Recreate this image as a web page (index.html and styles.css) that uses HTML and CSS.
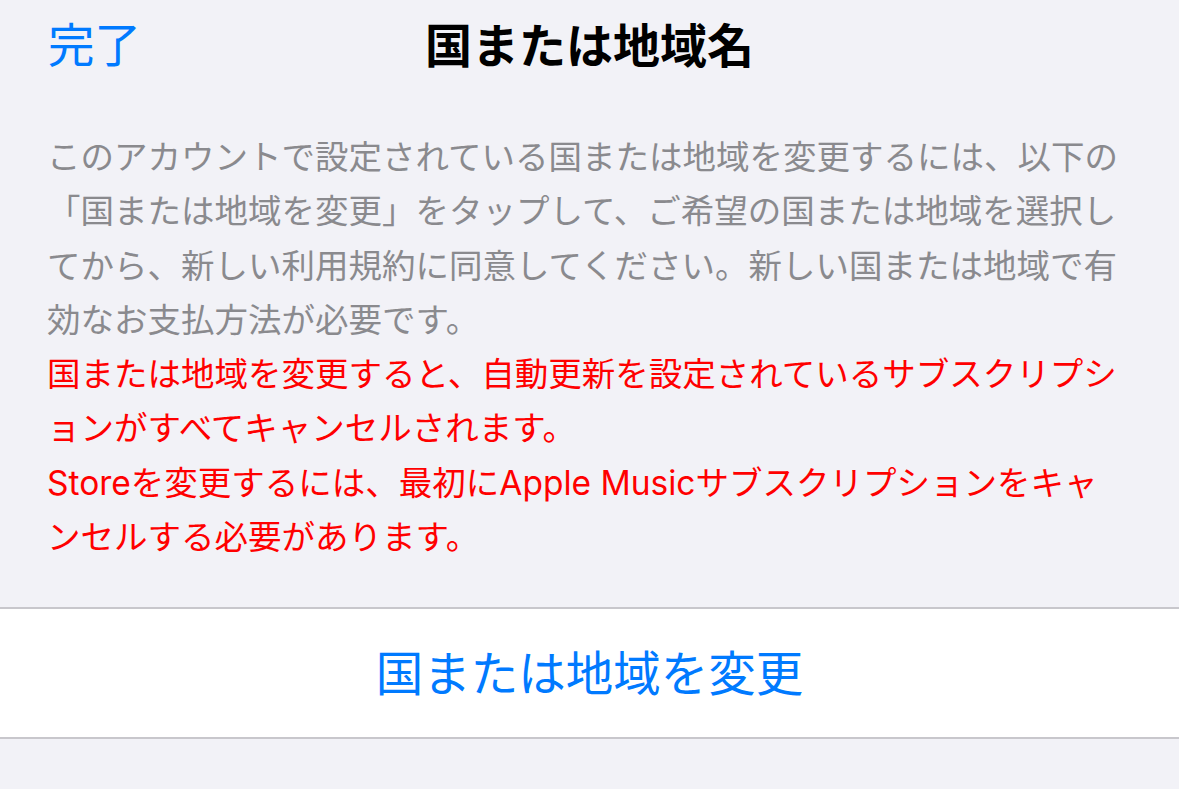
FILE: index.html
```html
<!DOCTYPE html>
<html lang="ja">
<head>
<meta charset="utf-8">
<title>国または地域名</title>
<link rel="stylesheet" href="styles.css">
</head>
<body>
<div class="screen">
  <header class="nav">
    <span class="nav-done">完了</span>
    <h1 class="nav-title">国または地域名</h1>
    <span class="nav-spacer"></span>
  </header>
  <section class="info">
    <p class="note">このアカウントで設定されている国または地域を変更するには、以下の<br>「国または地域を変更」をタップして、ご希望の国または地域を選択し<br>てから、新しい利用規約に同意してください。新しい国または地域で有<br>効なお支払方法が必要です。</p>
    <p class="warn">国または地域を変更すると、自動更新を設定されているサブスクリプシ<br>ョンがすべてキャンセルされます。</p>
    <p class="warn">Storeを変更するには、最初にApple Musicサブスクリプションをキャ<br>ンセルする必要があります。</p>
  </section>
  <div class="group">
    <div class="action">国または地域を変更</div>
  </div>
</div>
</body>
</html>
```

FILE: styles.css
```css
html, body {
  margin: 0;
  padding: 0;
  background: #f2f2f7;
}

body {
  font-family: Inter, "Noto Sans CJK JP", "Noto Sans", sans-serif;
  width: 1179px;
  height: 789px;
  overflow: hidden;
}

.screen {
  display: flex;
  flex-direction: column;
}

.nav {
  height: 90px;
  display: grid;
  grid-template-columns: 1fr auto 1fr;
  align-items: center;
  padding: 0 48px;
}

.nav-done {
  color: #007aff;
  font-size: 46.5px;
  line-height: 1;
  justify-self: start;
}

.nav-title {
  margin: 0;
  font-size: 47px;
  font-weight: 700;
  line-height: 1;
  color: #000;
}

.info {
  padding: 40px 40px 43px 47px;
}

.info p {
  margin: 0;
  font-size: 33.5px;
  line-height: 54.3px;
  white-space: nowrap;
}

.note {
  color: #8a8a8e;
}

.warn {
  color: #ff0000;
}

.group {
  background: #ffffff;
  border-top: 2px solid #c8c7cc;
  border-bottom: 2px solid #c8c7cc;
  height: 128px;
  display: flex;
  align-items: center;
  justify-content: center;
}

.action {
  color: #007aff;
  font-size: 47.5px;
  line-height: 1;
}
```
